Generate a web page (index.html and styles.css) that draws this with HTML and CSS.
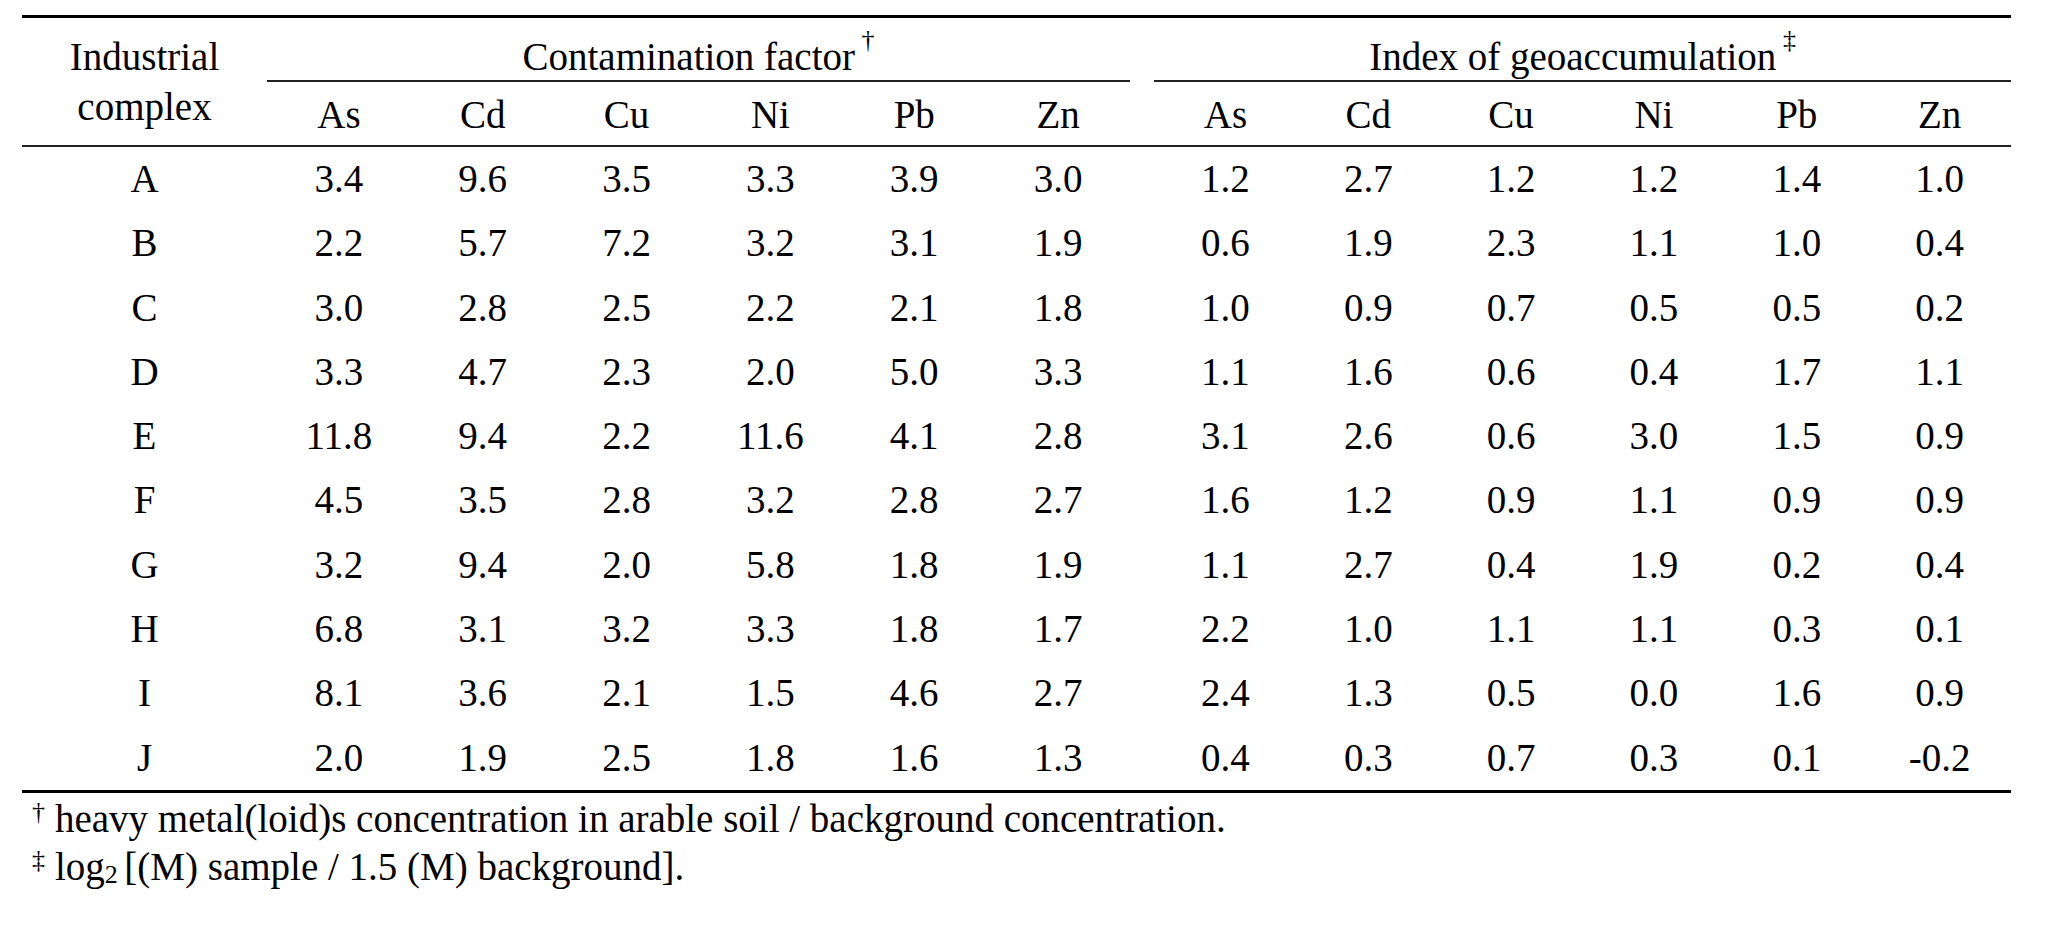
FILE: index.html
```html
<!DOCTYPE html>
<html lang="en">
<head>
<meta charset="utf-8">
<title>Contamination factor and index of geoaccumulation</title>
<link rel="stylesheet" href="styles.css">
</head>
<body>
<div class="page">
  <table class="data">
    <colgroup>
      <col class="c-label">
      <col class="c-cf" span="6">
      <col class="c-gap">
      <col class="c-ig" span="6">
    </colgroup>
    <thead>
      <tr class="groups">
        <th rowspan="2" class="label">Industrial<br>complex</th>
        <th colspan="6" class="group">Contamination factor<sup> †</sup></th>
        <th class="gap"></th>
        <th colspan="6" class="group">Index of geoaccumulation<sup> ‡</sup></th>
      </tr>
      <tr class="metals">
        <th>As</th><th>Cd</th><th>Cu</th><th>Ni</th><th>Pb</th><th>Zn</th>
        <th class="gap"></th>
        <th>As</th><th>Cd</th><th>Cu</th><th>Ni</th><th>Pb</th><th>Zn</th>
      </tr>
    </thead>
    <tbody>
      <tr><td>A</td><td>3.4</td><td>9.6</td><td>3.5</td><td>3.3</td><td>3.9</td><td>3.0</td><td></td><td>1.2</td><td>2.7</td><td>1.2</td><td>1.2</td><td>1.4</td><td>1.0</td></tr>
      <tr><td>B</td><td>2.2</td><td>5.7</td><td>7.2</td><td>3.2</td><td>3.1</td><td>1.9</td><td></td><td>0.6</td><td>1.9</td><td>2.3</td><td>1.1</td><td>1.0</td><td>0.4</td></tr>
      <tr><td>C</td><td>3.0</td><td>2.8</td><td>2.5</td><td>2.2</td><td>2.1</td><td>1.8</td><td></td><td>1.0</td><td>0.9</td><td>0.7</td><td>0.5</td><td>0.5</td><td>0.2</td></tr>
      <tr><td>D</td><td>3.3</td><td>4.7</td><td>2.3</td><td>2.0</td><td>5.0</td><td>3.3</td><td></td><td>1.1</td><td>1.6</td><td>0.6</td><td>0.4</td><td>1.7</td><td>1.1</td></tr>
      <tr><td>E</td><td>11.8</td><td>9.4</td><td>2.2</td><td>11.6</td><td>4.1</td><td>2.8</td><td></td><td>3.1</td><td>2.6</td><td>0.6</td><td>3.0</td><td>1.5</td><td>0.9</td></tr>
      <tr><td>F</td><td>4.5</td><td>3.5</td><td>2.8</td><td>3.2</td><td>2.8</td><td>2.7</td><td></td><td>1.6</td><td>1.2</td><td>0.9</td><td>1.1</td><td>0.9</td><td>0.9</td></tr>
      <tr><td>G</td><td>3.2</td><td>9.4</td><td>2.0</td><td>5.8</td><td>1.8</td><td>1.9</td><td></td><td>1.1</td><td>2.7</td><td>0.4</td><td>1.9</td><td>0.2</td><td>0.4</td></tr>
      <tr><td>H</td><td>6.8</td><td>3.1</td><td>3.2</td><td>3.3</td><td>1.8</td><td>1.7</td><td></td><td>2.2</td><td>1.0</td><td>1.1</td><td>1.1</td><td>0.3</td><td>0.1</td></tr>
      <tr><td>I</td><td>8.1</td><td>3.6</td><td>2.1</td><td>1.5</td><td>4.6</td><td>2.7</td><td></td><td>2.4</td><td>1.3</td><td>0.5</td><td>0.0</td><td>1.6</td><td>0.9</td></tr>
      <tr><td>J</td><td>2.0</td><td>1.9</td><td>2.5</td><td>1.8</td><td>1.6</td><td>1.3</td><td></td><td>0.4</td><td>0.3</td><td>0.7</td><td>0.3</td><td>0.1</td><td>-0.2</td></tr>
    </tbody>
  </table>
  <div class="notes">
    <p><sup>†</sup>heavy metal(loid)s concentration in arable soil / background concentration.</p>
    <p><sup>‡</sup>log<sub>2 </sub>[(M) sample / 1.5 (M) background].</p>
  </div>
</div>
</body>
</html>
```
FILE: styles.css
```css
body {
  margin: 0;
  background: #ffffff;
  color: #000000;
  font-family: "Liberation Serif", "Times New Roman", serif;
}

.page {
  padding: 15px 0 0 22px;
}

.data {
  border-collapse: separate;
  border-spacing: 0;
  table-layout: fixed;
  width: 1989px;
  border-top: 3px solid #000;
  border-bottom: 3px solid #000;
  font-size: 39px;
}

.c-label { width: 245px; }
.c-cf { width: 143.83px; }
.c-gap { width: 24px; }
.c-ig { width: 142.83px; }

.data th,
.data td {
  padding: 0;
  font-weight: normal;
  text-align: center;
  white-space: nowrap;
}

.data th.label {
  vertical-align: middle;
  line-height: 50px;
  border-bottom: 2px solid #222;
}

.data th.group {
  padding-top: 17px;
  padding-bottom: 2px;
  line-height: 43px;
  border-bottom: 2px solid #222;
}

.data .metals th {
  padding-top: 11px;
  padding-bottom: 9px;
  line-height: 43px;
  border-bottom: 2px solid #222;
}

.data td {
  line-height: 64.3px;
}

.data sup {
  font-size: 26px;
  line-height: 0;
  vertical-align: 22px;
}

.notes {
  padding: 2px 0 0 10px;
  font-size: 39px;
}

.notes p {
  margin: 0;
  line-height: 48px;
  white-space: nowrap;
}

.notes sup {
  font-size: 26px;
  line-height: 0;
  vertical-align: 12px;
  margin-right: 10px;
}

.notes sub {
  font-size: 26px;
  line-height: 0;
  vertical-align: -3px;
}
```
